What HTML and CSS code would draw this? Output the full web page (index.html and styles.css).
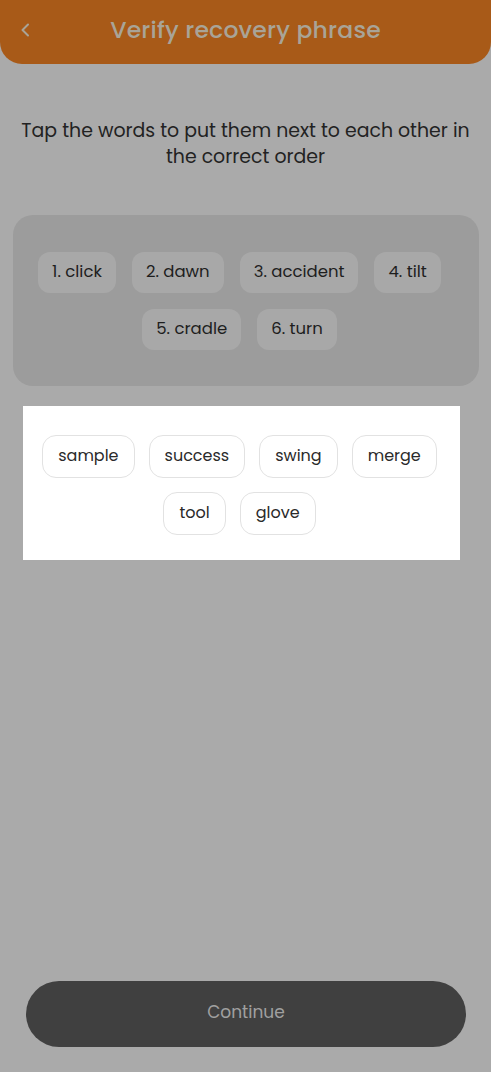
FILE: index.html
```html
<!DOCTYPE html>
<html lang="en">
<head>
<meta charset="utf-8">
<title>Verify recovery phrase</title>
<link rel="stylesheet" href="styles.css">
</head>
<body>
<div class="screen">
  <header class="topbar">
    <svg class="back" width="10" height="14" viewBox="0 0 10 14" aria-hidden="true"><path d="M8 1.5 L2.5 7 L8 12.5" fill="none" stroke="#a9a497" stroke-width="2" stroke-linecap="round" stroke-linejoin="round"/></svg>
    <h1 class="title">Verify recovery phrase</h1>
  </header>

  <p class="instruction">Tap the words to put them next to each other in the correct order</p>

  <div class="panel">
    <span class="chip">1. click</span>
    <span class="chip">2. dawn</span>
    <span class="chip">3. accident</span>
    <span class="chip">4. tilt</span>
    <span class="chip">5. cradle</span>
    <span class="chip">6. turn</span>
  </div>

  <div class="pool">
    <span class="word">sample</span>
    <span class="word">success</span>
    <span class="word">swing</span>
    <span class="word">merge</span>
    <span class="word">tool</span>
    <span class="word">glove</span>
  </div>

  <button class="continue" type="button">Continue</button>
</div>
</body>
</html>
```

FILE: styles.css
```css
* { box-sizing: border-box; }
html, body {
  margin: 0;
  padding: 0;
  background: #aaaaaa;
}
body {
  font-family: "Poppins", "Inter", "Noto Sans", sans-serif;
}
.screen {
  min-height: 1072px;
  display: flex;
  flex-direction: column;
}
.topbar {
  position: relative;
  height: 64px;
  background: #a85a18;
  border-radius: 0 0 22px 22px;
  display: flex;
  align-items: center;
  justify-content: center;
}
.back {
  position: absolute;
  left: 20px;
  top: 23px;
}
.title {
  margin: 0 0 6px 0;
  font-size: 23.5px;
  font-weight: 500;
  color: #a9a497;
  letter-spacing: 0.2px;
}
.instruction {
  margin: 54px 12px 0 12px;
  text-align: center;
  font-size: 18.9px;
  line-height: 26px;
  font-weight: 400;
  color: #222222;
}
.panel {
  margin: 45px 12px 0 13px;
  background: #9c9c9c;
  border-radius: 20px;
  padding: 37px 27px 36px 14px;
  display: flex;
  flex-wrap: wrap;
  justify-content: center;
  gap: 16px;
}
.chip {
  height: 41px;
  padding: 0 14px 3px;
  border-radius: 12px;
  background: #a8a8a8;
  color: #1e1e1e;
  font-size: 16.5px;
  font-weight: 400;
  display: flex;
  align-items: center;
}
.pool {
  margin: 20px 31px 0 23px;
  background: #ffffff;
  padding: 29px 20px 25px 16px;
  display: flex;
  flex-wrap: wrap;
  justify-content: center;
  column-gap: 14px;
  row-gap: 14px;
}
.word {
  height: 43px;
  padding: 0 15px 2px;
  border: 1px solid #e2e2e2;
  border-radius: 14px;
  background: #ffffff;
  color: #2a2a2a;
  font-size: 16px;
  font-weight: 400;
  display: flex;
  align-items: center;
}
.continue {
  margin: auto 25px 25px 26px;
  height: 66px;
  padding: 0 0 4px 0;
  border: none;
  border-radius: 33px;
  background: #404040;
  color: #a0a0a0;
  font-family: inherit;
  font-size: 17px;
  font-weight: 400;
}
```
